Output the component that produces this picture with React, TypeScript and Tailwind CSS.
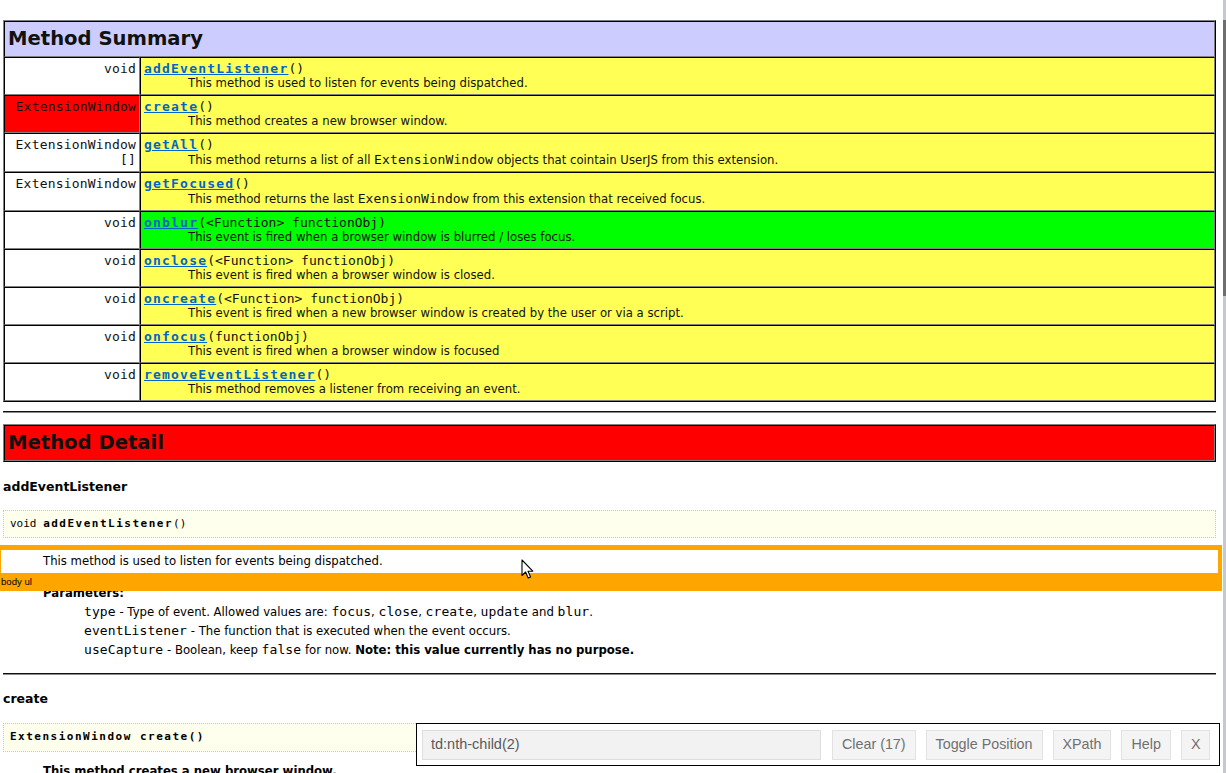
import React from "react";

const sans = "font-['DejaVu_Sans',sans-serif]";
const mono = "font-['DejaVu_Sans_Mono',monospace]";
const ui = "font-['Liberation_Sans',Arial,sans-serif]";

type Row = {
  type: React.ReactNode;
  name: string;
  args: string;
  desc: React.ReactNode;
  typeBg: string;
  cellBg: string;
  tall?: boolean;
};

const Code = ({ children }: { children: React.ReactNode }) => (
  <span className={`${mono} text-[13px] tracking-[0.1px]`}>{children}</span>
);

const rows: Row[] = [
  {
    type: "void",
    name: "addEventListener",
    args: "()",
    desc: "This method is used to listen for events being dispatched.",
    typeBg: "bg-white",
    cellBg: "bg-[#ffff55]",
  },
  {
    type: "ExtensionWindow",
    name: "create",
    args: "()",
    desc: "This method creates a new browser window.",
    typeBg: "bg-[#ff0000]",
    cellBg: "bg-[#ffff55]",
  },
  {
    type: (
      <>
        ExtensionWindow
        <br />
        []
      </>
    ),
    name: "getAll",
    args: "()",
    desc: (
      <>
        This method returns a list of all <Code>ExtensionWindow</Code> objects that cointain UserJS from this extension.
      </>
    ),
    typeBg: "bg-white",
    cellBg: "bg-[#ffff55]",
    tall: true,
  },
  {
    type: "ExtensionWindow",
    name: "getFocused",
    args: "()",
    desc: (
      <>
        This method returns the last <Code>ExensionWindow</Code> from this extension that received focus.
      </>
    ),
    typeBg: "bg-white",
    cellBg: "bg-[#ffff55]",
    tall: true,
  },
  {
    type: "void",
    name: "onblur",
    args: "(<Function> functionObj)",
    desc: "This event is fired when a browser window is blurred / loses focus.",
    typeBg: "bg-white",
    cellBg: "bg-[#00ff00]",
  },
  {
    type: "void",
    name: "onclose",
    args: "(<Function> functionObj)",
    desc: "This event is fired when a browser window is closed.",
    typeBg: "bg-white",
    cellBg: "bg-[#ffff55]",
  },
  {
    type: "void",
    name: "oncreate",
    args: "(<Function> functionObj)",
    desc: "This event is fired when a new browser window is created by the user or via a script.",
    typeBg: "bg-white",
    cellBg: "bg-[#ffff55]",
  },
  {
    type: "void",
    name: "onfocus",
    args: "(functionObj)",
    desc: "This event is fired when a browser window is focused",
    typeBg: "bg-white",
    cellBg: "bg-[#ffff55]",
  },
  {
    type: "void",
    name: "removeEventListener",
    args: "()",
    desc: "This method removes a listener from receiving an event.",
    typeBg: "bg-white",
    cellBg: "bg-[#ffff55]",
  },
];

const cellBorder =
  "border-t border-l border-b border-r border-t-black border-l-black border-b-[#808080] border-r-[#808080]";

function Hr() {
  return <div className="h-[2px] border-t border-b border-t-[#111] border-b-[#8a8a8a]" />;
}

function Btn({ children }: { children: React.ReactNode }) {
  return (
    <div
      className={`${ui} h-[30px] px-[9px] flex items-center bg-[#f4f4f4] border border-[#e2e2e2] text-[14.3px] text-[#707070]`}
    >
      {children}
    </div>
  );
}

export default function App() {
  return (
    <div className="relative w-[1226px] h-[773px] overflow-hidden bg-white text-black">
      <div className="pl-[3px] pt-[20px] w-[1216px]">
        {/* Method Summary */}
        <table className="w-[1213px] table-fixed border-separate border-spacing-0 border border-t-[#808080] border-l-[#808080] border-b-black border-r-black">
          <colgroup>
            <col className="w-[136px]" />
            <col />
          </colgroup>
          <tbody>
            <tr>
              <th
                colSpan={2}
                className={`${cellBorder} ${sans} bg-[#ccccff] text-left p-[3px] text-[19.6px] leading-[28px] font-bold text-[#111]`}
              >
                Method Summary
              </th>
            </tr>
            {rows.map((r, i) => (
              <tr key={i}>
                <td
                  className={`${cellBorder} ${r.typeBg} ${mono} p-[3px] align-top text-right text-[13px] leading-[15px] tracking-[0.2px] text-[#111]`}
                >
                  {r.type}
                </td>
                <td className={`${cellBorder} ${r.cellBg} p-[3px] align-top`}>
                  <div className={`${mono} text-[13px] leading-[15px] text-[#111] whitespace-pre`}>
                    <a className="text-[#0066cc] underline font-bold tracking-[1.2px]">{r.name}</a>
                    {r.args}
                  </div>
                  <div
                    className={`${sans} pl-[44px] text-[11.7px] text-[#111] whitespace-nowrap ${r.tall ? "leading-[16px]" : "leading-[15px]"}`}
                  >
                    {r.desc}
                  </div>
                </td>
              </tr>
            ))}
          </tbody>
        </table>

        <div className="mt-[9px]">
          <Hr />
        </div>

        {/* Method Detail */}
        <div className="mt-[11px] border border-t-[#808080] border-l-[#808080] border-b-black border-r-black">
          <div
            className={`${cellBorder} ${sans} bg-[#ff0000] p-[3px] text-[19.6px] leading-[28px] font-bold text-[#111]`}
          >
            Method Detail
          </div>
        </div>

        <div className={`${sans} mt-[17px] text-[12.5px] leading-[16px] font-bold`}>addEventListener</div>

        <div className="mt-[15px] h-[28px] border border-dotted border-[#cccc99] bg-[#ffffee] px-[6px] flex items-center">
          <span className={`${mono} text-[11px] whitespace-pre`}>
            void <b className="tracking-[1.5px]">addEventListener</b>()
          </span>
        </div>

        <div className={`${sans} mt-[12px] h-[23px] pl-[40px] text-[11.7px] leading-[23px]`}>
          This method is used to listen for events being dispatched.
        </div>

        <div className={`${sans} mt-[12px] h-[16px] pl-[40px] text-[11.7px] leading-[16px] font-bold`}>
          Parameters:
        </div>
        <div className={`${sans} mt-[1px] pl-[81px] text-[11.7px] leading-[19px]`}>
          <div className="h-[19px] whitespace-nowrap">
            <Code>type</Code> - Type of event. Allowed values are: <Code>focus</Code>, <Code>close</Code>,{" "}
            <Code>create</Code>, <Code>update</Code> and <Code>blur</Code>.
          </div>
          <div className="h-[19px] whitespace-nowrap">
            <Code>eventListener</Code> - The function that is executed when the event occurs.
          </div>
          <div className="h-[19px] whitespace-nowrap">
            <Code>useCapture</Code> - Boolean, keep <Code>false</Code> for now.{" "}
            <b>Note: this value currently has no purpose.</b>
          </div>
        </div>

        <div className="mt-[14px]">
          <Hr />
        </div>

        <div className={`${sans} mt-[16px] h-[16px] text-[12.5px] leading-[16px] font-bold`}>create</div>

        <div className="mt-[16px] h-[29px] border border-dotted border-[#cccc99] bg-[#ffffee] px-[6px] flex items-center">
          <span className={`${mono} text-[11px] whitespace-pre font-bold tracking-[1.5px]`}>
            ExtensionWindow create()
          </span>
        </div>

        <div className={`${sans} mt-[11px] pl-[40px] text-[11.7px] leading-[16px] font-bold`}>
          This method creates a new browser window.
        </div>
      </div>

      {/* SelectorGadget highlight overlay */}
      <div className="absolute left-0 top-[545px] w-[1222px] h-[46px] border-solid border-[#ffa500] border-t-[5px] border-l-[1px] border-r-[4px] border-b-[18px]" />
      <div className={`${ui} absolute left-[1px] top-[574px] text-[9.6px] leading-[16px] text-black`}>body ul</div>

      {/* mouse cursor */}
      <svg className="absolute left-[521px] top-[559px]" width="14" height="22" viewBox="0 0 14 22">
        <path
          d="M1 1 L1 16.5 L4.6 13 L7.2 19 L9.6 18 L7 12.2 L11.8 12.2 Z"
          fill="white"
          stroke="black"
          strokeWidth="1.1"
          strokeLinejoin="round"
        />
      </svg>

      {/* SelectorGadget toolbar */}
      <div className="absolute left-[416px] top-[723px] w-[804px] h-[43px] border border-black bg-white flex items-center pl-[5px] gap-[10px]">
        <div
          className={`${ui} w-[399px] h-[30px] mr-[1px] flex items-center px-[8px] bg-[#f2f2f2] border border-[#dedede] text-[14.5px] text-[#5a5a5a]`}
        >
          td:nth-child(2)
        </div>
        <Btn>Clear (17)</Btn>
        <Btn>Toggle Position</Btn>
        <Btn>XPath</Btn>
        <Btn>Help</Btn>
        <Btn>X</Btn>
      </div>

      {/* scrollbar */}
      <div className="absolute right-0 top-0 w-[3px] h-[773px] bg-[#c4c8cf]">
        <div className="mt-[20px] h-[276px] bg-[#6e6e6e]" />
      </div>
    </div>
  );
}
